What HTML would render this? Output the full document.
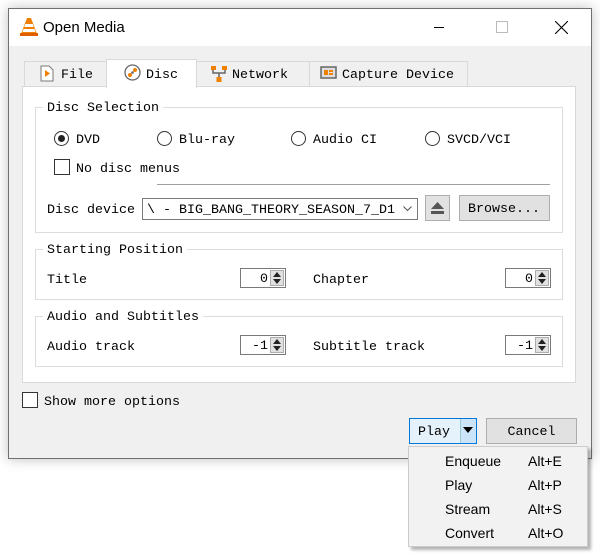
<!DOCTYPE html>
<html><head><style>
*{box-sizing:border-box;margin:0;padding:0}
body{width:600px;height:556px;background:#fff;position:relative;overflow:hidden;font-family:"Liberation Mono",monospace;font-size:13.33px;color:#000}
.a{position:absolute}
.win{left:8px;top:8px;width:584px;height:451px;background:#f0f0f0;border:1px solid #707070;box-shadow:0 0 12px rgba(0,0,0,.25)}
.tb{left:9px;top:9px;width:582px;height:37px;background:#fff}
.t{position:absolute;white-space:nowrap;line-height:16px;transform:translateY(2px)}
.grp{position:absolute;border:1px solid #dcdcdc}
.gl{position:absolute;background:#fff;padding:0 4px;line-height:16px;top:-9px;left:7px;transform:translateY(2px)}
.radio{position:absolute;width:15px;height:15px;border:1px solid #333;border-radius:50%;background:#fff}
.spin{position:absolute;width:46px;height:20px;border:1px solid #7a7a7a;background:#fff}
.spin span{position:absolute;right:17px;top:3px;line-height:16px}
.arr{position:absolute;right:1px;top:1px;width:14px;height:16px;background:#e1e1e1;border:1px solid #adadad}
.arr:before{content:"";position:absolute;left:2px;top:1px;border-left:4px solid transparent;border-right:4px solid transparent;border-bottom:5px solid #222}
.arr:after{content:"";position:absolute;left:2px;top:8px;border-left:4px solid transparent;border-right:4px solid transparent;border-top:5px solid #222}
.btn{position:absolute;background:#e1e1e1;border:1px solid #adadad;text-align:center}
.sans{font-family:"Liberation Sans",sans-serif;font-size:14px;transform:none}
</style></head><body>
<div class="a win"></div>
<div class="a tb"></div>
<svg class="a" style="left:19px;top:17px" width="20" height="20" viewBox="0 0 20 20"><path d="M8 1h4l6 16H2z" fill="#f08000"/><path d="M6.3 7h7.4l1 3H5.3zM4.5 12h11l1 3h-13z" fill="#fff"/><rect x="1" y="16" width="18" height="3" fill="#e06000"/></svg>
<div class="t sans" style="left:43px;top:19px;font-size:15px;transform:translateY(1px)">Open Media</div>
<div class="a" style="left:434px;top:27px;width:10px;height:1px;background:#000"></div>
<div class="a" style="left:496px;top:21px;width:12px;height:12px;border:1px solid #bbb"></div>
<svg class="a" style="left:555px;top:21px" width="13" height="13"><path d="M0 0L13 13M13 0L0 13" stroke="#000" stroke-width="1.1"/></svg>

<div class="a" style="left:24px;top:61px;width:83px;height:26px;border:1px solid #d9d9d9;background:#f0f0f0"></div>
<div class="a" style="left:196px;top:61px;width:114px;height:26px;border:1px solid #d9d9d9;background:#f0f0f0"></div>
<div class="a" style="left:309px;top:61px;width:159px;height:26px;border:1px solid #d9d9d9;background:#f0f0f0"></div>
<div class="a" style="left:22px;top:86px;width:554px;height:297px;border:1px solid #d9d9d9;background:#fff"></div>
<div class="a" style="left:106px;top:59px;width:91px;height:29px;border:1px solid #d9d9d9;border-bottom:none;background:#fff"></div>
<svg class="a" style="left:40px;top:65px" width="14" height="17"><path d="M1 1h8l4 4v11H1z" fill="#fff" stroke="#777"/><path d="M5 5l5 3.5-5 3.5z" fill="#f08000"/></svg>
<div class="t" style="left:61px;top:66px">File</div>
<svg class="a" style="left:124px;top:64px" width="17" height="17"><circle cx="8.5" cy="8.5" r="7.5" fill="#fff" stroke="#666" stroke-width="1.3"/><circle cx="6" cy="11" r="2" fill="#f08000"/><circle cx="11" cy="6" r="2" fill="#f08000"/><circle cx="8.5" cy="8.5" r="1.3" fill="#666"/></svg>
<div class="t" style="left:146px;top:66px">Disc</div>
<svg class="a" style="left:210px;top:65px" width="18" height="18"><rect x="1" y="1" width="5" height="4" fill="#f08000"/><rect x="12" y="1" width="5" height="4" fill="#f08000"/><rect x="6.5" y="12" width="5" height="5" fill="#f08000"/><path d="M3 5v3h12V5M9 8v4" stroke="#666" fill="none" stroke-width="1.5"/></svg>
<div class="t" style="left:232px;top:66px">Network</div>
<svg class="a" style="left:320px;top:66px" width="18" height="15"><rect x="1" y="1" width="15" height="11" fill="#ddd" stroke="#666" stroke-width="1.5"/><rect x="4" y="4" width="4" height="5" fill="#f08000"/><rect x="9" y="4" width="4" height="2" fill="#f08000"/><rect x="9" y="7" width="4" height="2" fill="#f08000"/></svg>
<div class="t" style="left:342px;top:66px">Capture Device</div>

<div class="grp" style="left:35px;top:107px;width:528px;height:126px"><div class="gl">Disc Selection</div></div>
<div class="radio" style="left:54px;top:131px"><div class="a" style="left:3px;top:3px;width:7px;height:7px;border-radius:50%;background:#222"></div></div>
<div class="t" style="left:76px;top:131px">DVD</div>
<div class="radio" style="left:157px;top:131px"></div>
<div class="t" style="left:179px;top:131px">Blu-ray</div>
<div class="radio" style="left:291px;top:131px"></div>
<div class="t" style="left:313px;top:131px">Audio CI</div>
<div class="radio" style="left:425px;top:131px"></div>
<div class="t" style="left:447px;top:131px">SVCD/VCI</div>
<div class="a" style="left:54px;top:159px;width:16px;height:16px;border:1px solid #333;background:#fff"></div>
<div class="t" style="left:76px;top:160px">No disc menus</div>
<div class="a" style="left:157px;top:184px;width:393px;height:1px;background:#a0a0a0"></div>
<div class="t" style="left:47px;top:201px">Disc device</div>
<div class="a" style="left:142px;top:198px;width:276px;height:22px;border:1px solid #7a7a7a;background:#fff"></div>
<div class="t" style="left:147px;top:201px">\ - BIG_BANG_THEORY_SEASON_7_D1</div>
<svg class="a" style="left:403px;top:206px" width="9" height="6"><path d="M0.5 0.5L4.5 4.5L8.5 0.5" stroke="#555" fill="none"/></svg>
<div class="btn" style="left:425px;top:195px;width:25px;height:26px"></div>
<svg class="a" style="left:430px;top:201px" width="15" height="14"><path d="M7.5 1L14 8H1z" fill="#555"/><rect x="1" y="10" width="13" height="3" fill="#555"/></svg>
<div class="btn" style="left:459px;top:195px;width:91px;height:26px"><div class="t" style="left:8px;top:4px">Browse...</div></div>

<div class="grp" style="left:35px;top:249px;width:528px;height:51px"><div class="gl">Starting Position</div></div>
<div class="t" style="left:47px;top:271px">Title</div>
<div class="spin" style="left:240px;top:268px"><span>0</span><div class="arr"></div></div>
<div class="t" style="left:313px;top:271px">Chapter</div>
<div class="spin" style="left:505px;top:268px"><span>0</span><div class="arr"></div></div>

<div class="grp" style="left:35px;top:316px;width:528px;height:51px"><div class="gl">Audio and Subtitles</div></div>
<div class="t" style="left:47px;top:338px">Audio track</div>
<div class="spin" style="left:240px;top:335px"><span>-1</span><div class="arr"></div></div>
<div class="t" style="left:313px;top:338px">Subtitle track</div>
<div class="spin" style="left:505px;top:335px"><span>-1</span><div class="arr"></div></div>

<div class="a" style="left:22px;top:392px;width:16px;height:16px;border:1px solid #333;background:#fff"></div>
<div class="t" style="left:44px;top:393px">Show more options</div>

<div class="a" style="left:409px;top:418px;width:68px;height:26px;border:1px solid #0078d7;background:#e5f1fb"></div>
<div class="a" style="left:460px;top:419px;width:16px;height:24px;background:#cce4f7;border-left:1px solid #9cc"></div>
<svg class="a" style="left:463px;top:427px" width="10" height="6"><path d="M0 0h10L5 6z" fill="#000"/></svg>
<div class="t" style="left:418px;top:423px">Play</div>
<div class="btn" style="left:486px;top:418px;width:91px;height:26px"><div class="t" style="left:0;width:89px;top:4px">Cancel</div></div>

<div class="a" style="left:408px;top:446px;width:180px;height:101px;background:#f2f2f2;border:1px solid #ccc;box-shadow:3px 3px 3px rgba(0,0,0,.3)"></div>
<div class="t sans" style="left:445px;top:453px">Enqueue</div><div class="t sans" style="left:528px;top:453px">Alt+E</div>
<div class="t sans" style="left:445px;top:477px">Play</div><div class="t sans" style="left:528px;top:477px">Alt+P</div>
<div class="t sans" style="left:445px;top:501px">Stream</div><div class="t sans" style="left:528px;top:501px">Alt+S</div>
<div class="t sans" style="left:445px;top:525px">Convert</div><div class="t sans" style="left:528px;top:525px">Alt+O</div>
</body></html>
